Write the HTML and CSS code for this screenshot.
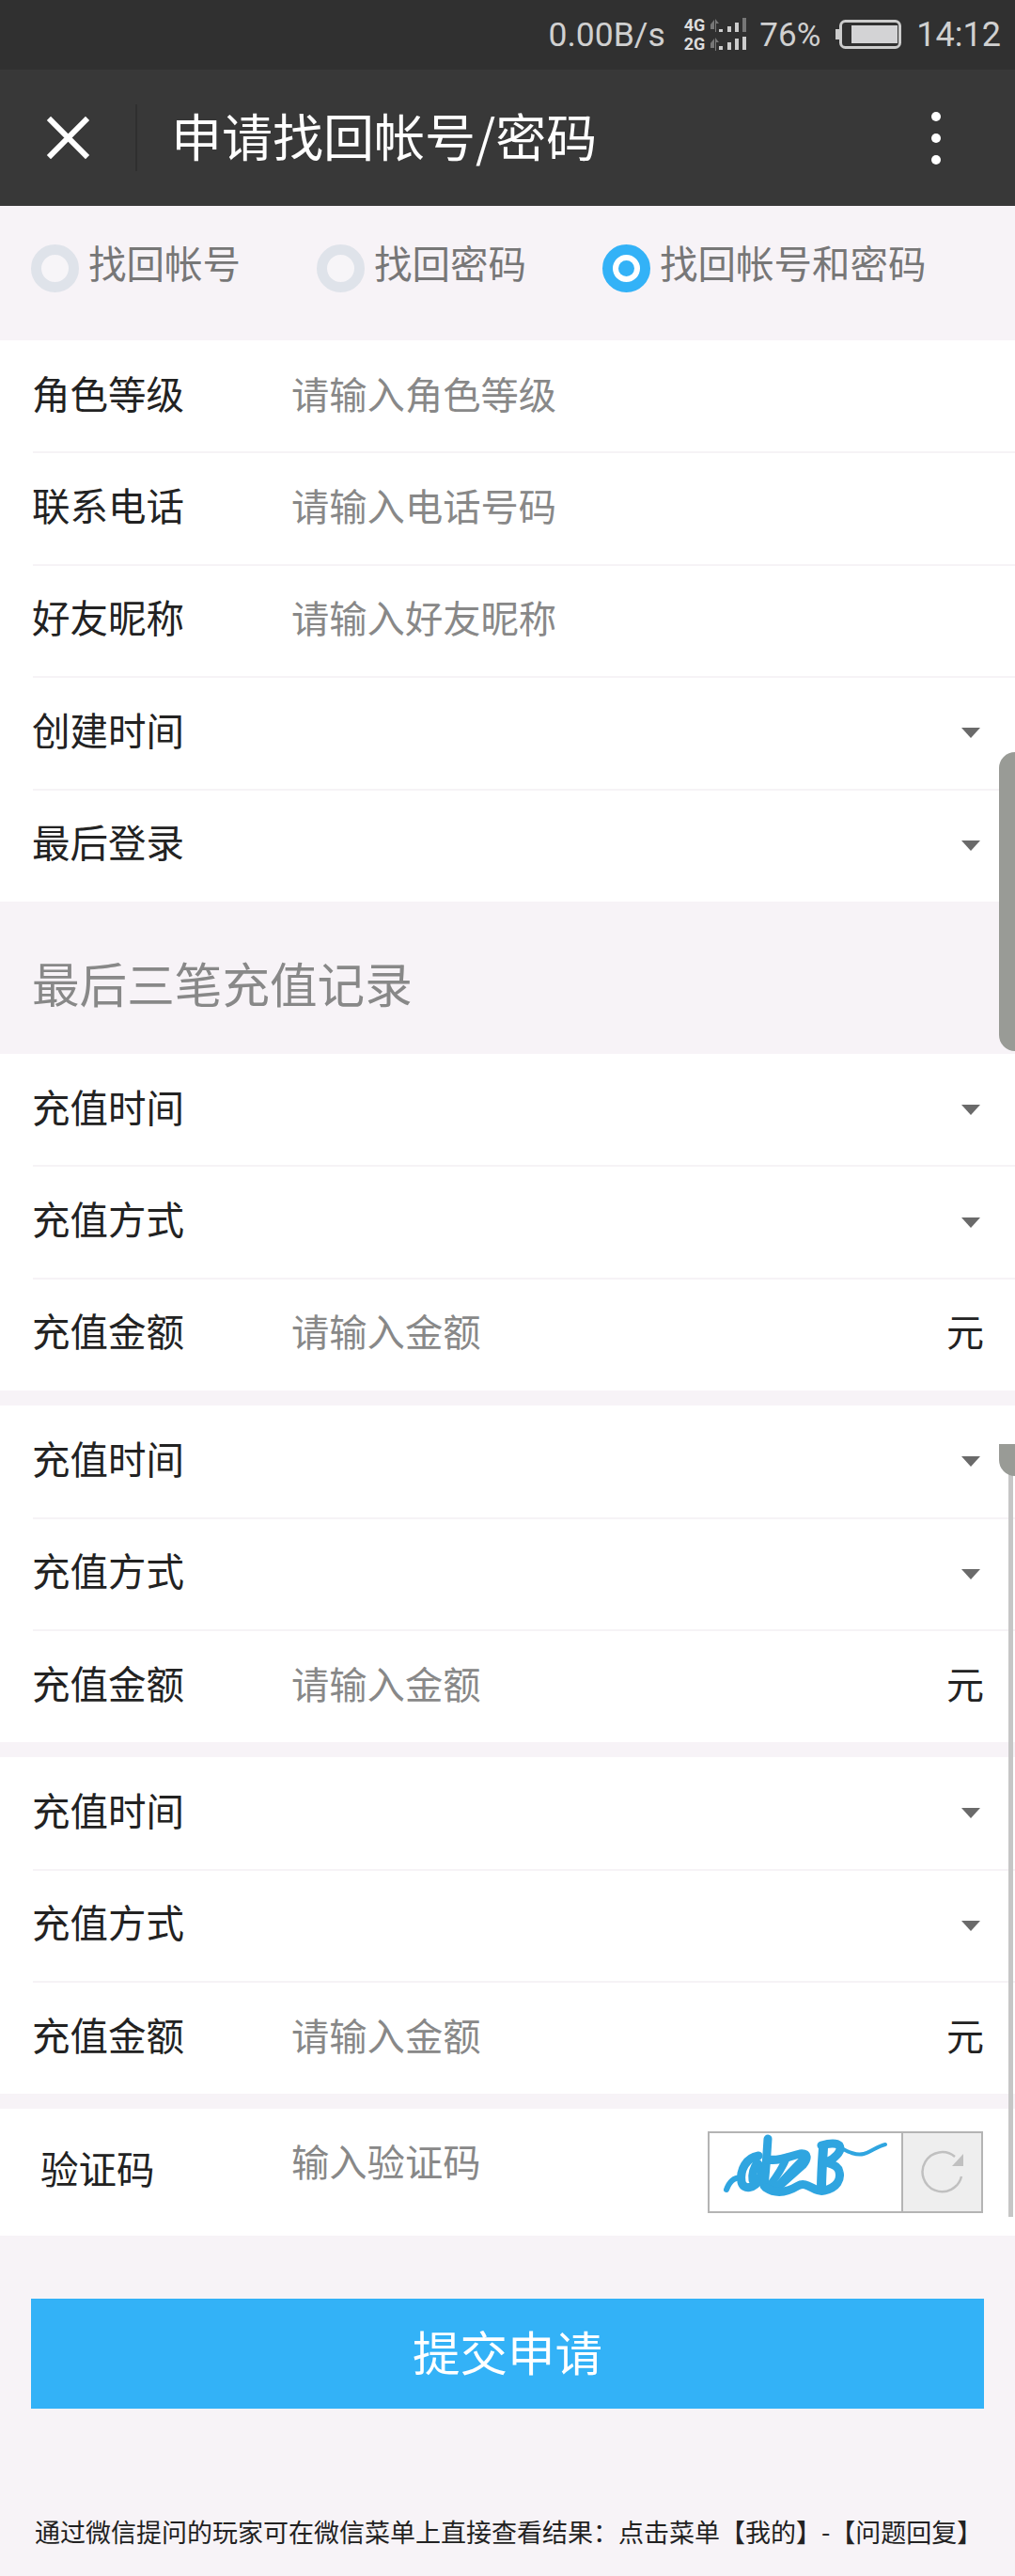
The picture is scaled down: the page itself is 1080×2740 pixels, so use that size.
FILE: index.html
```html
<!DOCTYPE html>
<html lang="zh">
<head>
<meta charset="utf-8">
<title>申请找回帐号/密码</title>
<link rel="stylesheet" href="styles.css">
</head>
<body>
<div class="page">
  <div class="status">
    <span class="speed">0.00B/s</span>
    <div class="net">
      <div class="net-tags"><span>4G</span><span>2G</span></div>
      <svg class="signal" width="38" height="36" viewBox="0 0 38 36">
        <g fill="#777"><path d="M0 7l4-5v10H0zM5 1l4 5H6v9l-1 0z"/><path d="M0 27l4-5v10H0zM5 21l4 5H6v9l-1 0z"/></g>
        <g fill="#ccc"><rect x="9" y="12" width="4" height="3"/><rect x="18" y="9" width="4" height="6"/><rect x="26" y="5" width="4" height="10"/><rect x="9" y="30" width="4" height="4"/><rect x="18" y="26" width="4" height="8"/><rect x="26" y="22" width="4" height="12"/><rect x="34" y="20" width="4" height="14"/></g>
        <rect x="34" y="0" width="4" height="15" fill="#777"/>
      </svg>
    </div>
    <span class="pct">76%</span>
    <svg class="battery" width="70" height="32" viewBox="0 0 70 32">
      <rect x="0" y="10" width="4" height="11" fill="#ccc"/>
      <rect x="5.5" y="1.5" width="63" height="28" rx="5" fill="none" stroke="#ccc" stroke-width="3"/>
      <rect x="17" y="6" width="49" height="19" fill="#d3d3d5"/>
    </svg>
    <span class="clock">14:12</span>
  </div>
  <div class="nav">
    <svg class="close" width="48" height="48" viewBox="0 0 48 48"><path d="M3 3l42 42M45 3L3 45" stroke="#fff" stroke-width="6" fill="none"/></svg>
    <div class="nav-sep"></div>
    <div class="nav-title">申请找回帐号/密码</div>
    <div class="dots"><i></i><i></i><i></i></div>
  </div>
  <div class="radios">
    <div class="radio"><i class="dot"></i><span class="radio-text">找回帐号</span></div>
    <div class="radio"><i class="dot"></i><span class="radio-text">找回密码</span></div>
    <div class="radio on"><i class="dot"></i><span class="radio-text">找回帐号和密码</span></div>
  </div>
  <div class="group first">
    <div class="row"><div class="label">角色等级</div><div class="ph">请输入角色等级</div></div>
    <div class="row"><div class="label">联系电话</div><div class="ph">请输入电话号码</div></div>
    <div class="row"><div class="label">好友昵称</div><div class="ph">请输入好友昵称</div></div>
    <div class="row"><div class="label">创建时间</div><i class="arrow"></i></div>
    <div class="row"><div class="label">最后登录</div><i class="arrow"></i></div>
  </div>
  <div class="section-title">最后三笔充值记录</div>
  <div class="group first">
    <div class="row"><div class="label">充值时间</div><i class="arrow"></i></div>
    <div class="row"><div class="label">充值方式</div><i class="arrow"></i></div>
    <div class="row"><div class="label">充值金额</div><div class="ph">请输入金额</div><div class="unit">元</div></div>
  </div>
  <div class="group">
    <div class="row"><div class="label">充值时间</div><i class="arrow"></i></div>
    <div class="row"><div class="label">充值方式</div><i class="arrow"></i></div>
    <div class="row"><div class="label">充值金额</div><div class="ph">请输入金额</div><div class="unit">元</div></div>
  </div>
  <div class="group">
    <div class="row"><div class="label">充值时间</div><i class="arrow"></i></div>
    <div class="row"><div class="label">充值方式</div><i class="arrow"></i></div>
    <div class="row"><div class="label">充值金额</div><div class="ph">请输入金额</div><div class="unit">元</div></div>
  </div>
  <div class="captcha-row">
    <div class="captcha-label">验证码</div>
    <div class="ph captcha-ph">输入验证码</div>
    <div class="captcha">
      <svg class="captcha-img" width="204" height="83" viewBox="0 0 204 83">
        <g fill="none" stroke="#2fa5e0" stroke-linecap="round" stroke-linejoin="round">
          <path stroke-width="6" d="M18 60c3-8 7-13 17-13"/>
          <path stroke-width="9" d="M52 24c-13 2-20 15-18 28 2 9 14 7 20-4 3-6 1-12-3-16-4 4-6 12-5 18"/>
          <path stroke-width="9" d="M62 6c-1 16-2 33-4 50"/>
          <path stroke-width="9" d="M62 28c12 2 22-3 34-6 9-1 9 5 3 12L72 58c10-12 20-22 30-32"/>
          <path stroke-width="8" d="M82 26c-4 10-12 22-18 30"/>
          <path stroke-width="9" d="M60 58c12 8 24 4 34-2 10-6 18 8 28 5 14-3 18-12 16-20-1-8-12-9-14-10 8-3 18-12 14-18-3-3-12-2-19 0"/>
          <path stroke-width="10" d="M121 16c-1 14-2 30-2 44"/>
          <path stroke-width="4" d="M140 16c8 4 16 8 24 6 8-2 14-8 23-10"/>
        </g>
      </svg>
      <div class="refresh">
        <svg width="83" height="83" viewBox="0 0 83 83">
          <path d="M62 46A21 21 0 1 1 55 25" fill="none" stroke="#c0c0c0" stroke-width="2.5"/>
          <path d="M64 22v13H52z" fill="#c0c0c0"/>
        </svg>
      </div>
    </div>
  </div>
  <div class="submit-wrap"><div class="submit">提交申请</div></div>
  <div class="note">通过微信提问的玩家可在微信菜单上直接查看结果：点击菜单【我的】-【问题回复】</div>
  <div class="thumb-big"></div>
  <div class="track"></div>
  <div class="thumb-small"></div>
</div>
</body>
</html>
```
FILE: styles.css
```css
* { box-sizing: border-box; }
html, body { margin: 0; padding: 0; }
body { background: #f7f3f7; font-family: "Noto Sans CJK SC", "Noto Sans", sans-serif; }
.page { position: relative; width: 1080px; height: 2740px; overflow: hidden; background: #f7f3f7; }

.status { height: 74px; background: #303030; display: flex; align-items: center; justify-content: flex-end; padding: 0 15px 0 0; color: #d0d0d0; font-family: Roboto, sans-serif; }
.speed { margin-right: 20px; font-size: 35.5px; }
.net { display: flex; align-items: center; margin-right: 14px; }
.net-tags { display: flex; flex-direction: column; font-size: 18px; font-weight: 700; line-height: 20px; margin-right: 6px; color: #ddd; }
.pct { margin-right: 16px; font-size: 35px; }
.battery { margin-right: 16px; }
.clock { font-size: 36px; }

.nav { height: 145px; background: #383838; display: flex; align-items: center; padding-left: 49px; position: relative; }
.close { width: 47px; height: 47px; }
.nav-sep { width: 2px; height: 71px; background: #2f2f2f; margin-left: 48px; }
.nav-title { color: #fff; font-size: 54px; margin-left: 36px; line-height: 60px; margin-bottom: 6px; }
.dots { margin-left: auto; margin-right: 79px; display: flex; flex-direction: column; gap: 13px; }
.dots i { display: block; width: 10px; height: 10px; border-radius: 50%; background: #fff; }

.radios { height: 143px; display: flex; align-items: center; padding: 0 0 10px 33px; }
.radio { width: 304px; display: flex; align-items: center; font-size: 40.5px; color: #777; line-height: 52px; }
.radio.on { width: auto; }
.radio-text { margin-bottom: 14px; margin-left: -1px; }
.dot { display: block; width: 51px; height: 51px; border-radius: 50%; border: 11px solid #dfe3ea; background: #f7f5f8; margin-right: 11px; position: relative; }
.on .dot { border-color: #33b2f7; background: #fff; }
.on .dot::after { content: ""; position: absolute; left: 6px; top: 6px; width: 17px; height: 17px; border-radius: 50%; background: #33b2f7; }

.group { background: #fff; margin-top: 16px; }
.group.first { margin-top: 0; }
.row { height: 119.4px; display: flex; align-items: center; padding: 0 33px 0 34px; position: relative; font-size: 40.5px; }
.row + .row::before { content: ""; position: absolute; left: 35px; right: 0; top: -1px; height: 2px; background: #f6f3f6; }
.label { width: 276px; color: #222; flex: none; margin-bottom: 9px; }
.ph { color: #888; font-size: 40.3px; flex: 1; margin-bottom: 9px; }
.unit { color: #222; font-size: 40px; margin-bottom: 8px; }
.arrow { margin-left: auto; margin-right: 4px; width: 0; height: 0; border-left: 10px solid transparent; border-right: 10px solid transparent; border-top: 11px solid #6a6a6a; }

.section-title { height: 162px; display: flex; align-items: center; padding: 10px 0 0 34px; font-size: 50.6px; color: #888; }

.captcha-row { height: 135px; background: #fff; margin-top: 16px; display: flex; align-items: center; padding: 0 34px 0 43px; font-size: 40.5px; }
.captcha-label { width: 267px; color: #222; flex: none; margin-bottom: 10px; }
.captcha-ph { margin-bottom: 27px; }
.captcha { width: 293px; height: 87px; border: 2px solid #b4b4b4; display: flex; flex: none; background: #fff; }
.captcha-img { display: block; flex: none; }
.refresh { width: 85px; background: #eeeeee; border-left: 2px solid #b4b4b4; }
.refresh svg { display: block; }

.submit-wrap { padding: 67px 33px 0 33px; }
.submit { height: 117px; background: #33b2f7; color: #fff; font-size: 50.5px; display: flex; align-items: center; justify-content: center; padding-bottom: 8px; }
.note { margin-top: 111px; padding-left: 37px; font-size: 27px; color: #222; white-space: nowrap; line-height: 40px; }

.thumb-big { position: absolute; left: 1063px; top: 800px; width: 17px; height: 318px; background: #999b96; border-radius: 18px 0 0 18px; }
.track { position: absolute; left: 1073px; top: 1536px; width: 5px; height: 822px; background: #c6c6c6; }
.thumb-small { position: absolute; left: 1063px; top: 1536px; width: 17px; height: 34px; background: #999b96; border-radius: 0 0 0 18px; }
```
